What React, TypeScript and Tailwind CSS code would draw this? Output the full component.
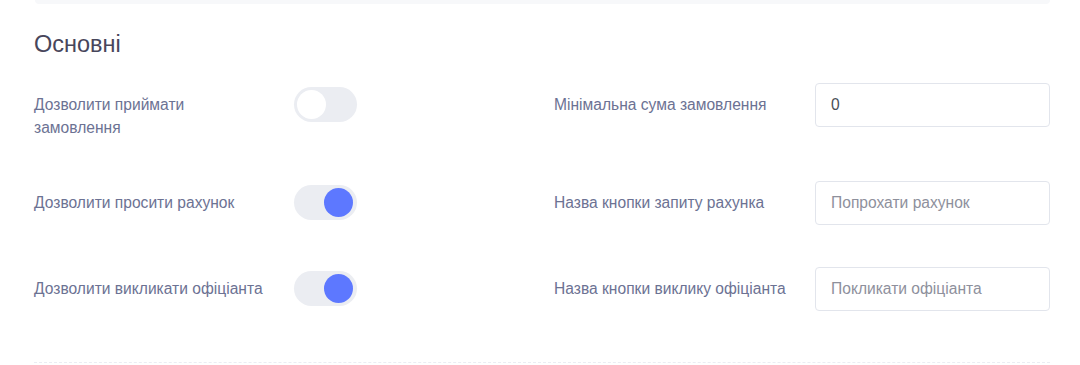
import React, { useState } from "react";

const FONT = { fontFamily: '"Liberation Sans", Arial, sans-serif' };

function Toggle({ on, onChange }: { on: boolean; onChange: () => void }) {
  return (
    <button
      type="button"
      onClick={onChange}
      aria-pressed={on}
      className="relative mt-[4px] h-[35px] w-[63px] shrink-0 rounded-full bg-[#ebedf2]"
    >
      <span
        className={
          on
            ? "absolute right-[4px] top-[3px] h-[29px] w-[29px] rounded-full bg-[#5d78ff]"
            : "absolute left-[3px] top-[3px] h-[29px] w-[29px] rounded-full bg-white"
        }
      />
    </button>
  );
}

function TextField({ value, placeholder }: { value?: string; placeholder?: string }) {
  return (
    <input
      defaultValue={value}
      placeholder={placeholder}
      className="h-[44px] w-full rounded-[4px] border border-[#e2e5ec] bg-white px-[15px] text-[15.6px] text-[#495057] placeholder:text-[#8e909c] outline-none"
      style={FONT}
    />
  );
}

interface Row {
  toggleLabel: string;
  on: boolean;
  fieldLabel: string;
  value?: string;
  placeholder?: string;
}

const ROWS: Row[] = [
  { toggleLabel: "Дозволити приймати замовлення", on: false, fieldLabel: "Мінімальна сума замовлення", value: "0" },
  { toggleLabel: "Дозволити просити рахунок", on: true, fieldLabel: "Назва кнопки запиту рахунка", placeholder: "Попрохати рахунок" },
  { toggleLabel: "Дозволити викликати офіціанта", on: true, fieldLabel: "Назва кнопки виклику офіціанта", placeholder: "Покликати офіціанта" },
];

export default function App() {
  const [flags, setFlags] = useState(ROWS.map((r) => r.on));

  return (
    <div className="min-h-[365px] w-[1080px] bg-white" style={FONT}>
      <div className="ml-[35px] mr-[30px] h-[4px] rounded-b-[4px] bg-[#f7f8fa]" />
      <div className="pl-[34px] pr-[30px]">
        <h3 className="mt-[26px] text-[23.5px] leading-[28px] font-normal text-[#48465b]">Основні</h3>

        <div className="mt-[25px] flex flex-col gap-[42px]">
          {ROWS.map((row, i) => (
            <div key={row.toggleLabel} className="flex items-start">
              <div className="flex w-[520px] items-start">
                <label className="w-[260px] shrink-0 pr-[20px] pt-[10px] text-[15.6px] leading-[23px] text-[#6c7293]">
                  {row.toggleLabel}
                </label>
                <Toggle
                  on={flags[i]}
                  onChange={() => setFlags((f) => f.map((v, j) => (j === i ? !v : v)))}
                />
              </div>
              <div className="flex flex-1 items-start">
                <label className="w-[261px] shrink-0 pt-[10px] text-[15.6px] leading-[23px] text-[#6c7293]">
                  {row.fieldLabel}
                </label>
                <TextField value={row.value} placeholder={row.placeholder} />
              </div>
            </div>
          ))}
        </div>

        <div className="mt-[51px] border-t border-dashed border-[#ebedf3]" />
      </div>
    </div>
  );
}
